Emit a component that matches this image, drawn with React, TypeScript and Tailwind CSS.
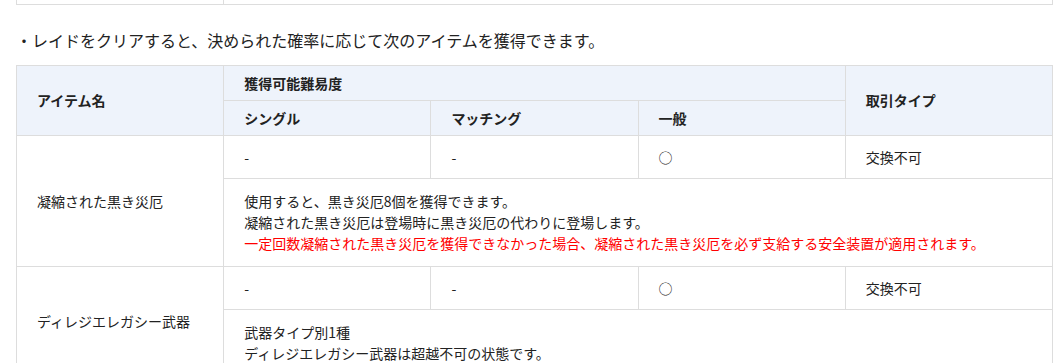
const cell = 'border border-[#dddddd] px-5 text-left align-middle'

interface Item {
    name: string
    single: string
    matching: string
    normal: string
    trade: string
    notes: { text: string; red?: boolean }[]
}

const items: Item[] = [
    {
        name: '凝縮された黒き災厄',
        single: '-',
        matching: '-',
        normal: '○',
        trade: '交換不可',
        notes: [
            { text: '使用すると、黒き災厄8個を獲得できます。' },
            { text: '凝縮された黒き災厄は登場時に黒き災厄の代わりに登場します。' },
            {
                text: '一定回数凝縮された黒き災厄を獲得できなかった場合、凝縮された黒き災厄を必ず支給する安全装置が適用されます。',
                red: true,
            },
        ],
    },
    {
        name: 'ディレジエレガシー武器',
        single: '-',
        matching: '-',
        normal: '○',
        trade: '交換不可',
        notes: [
            { text: '武器タイプ別1種' },
            { text: 'ディレジエレガシー武器は超越不可の状態です。' },
        ],
    },
]

function ItemRows({ item }: { item: Item }) {
    return (
        <>
            <tr className="h-[43px]">
                <td rowSpan={2} className={cell}>{item.name}</td>
                <td className={cell}>{item.single}</td>
                <td className={cell}>{item.matching}</td>
                <td className={cell}>{item.normal}</td>
                <td className={cell}>{item.trade}</td>
            </tr>
            <tr>
                <td colSpan={4} className={`${cell} py-[12px]`}>
                    {item.notes.map((n, i) => (
                        <div key={i} className={n.red ? 'text-[#ff0000]' : ''}>
                            {n.text}
                        </div>
                    ))}
                </td>
            </tr>
        </>
    )
}

export default function App() {
    return (
        <div
            className="bg-white text-[#222222] h-[363px] overflow-hidden"
            style={{ fontFamily: '"Noto Sans CJK JP", "Noto Sans", sans-serif' }}
        >
            {/* bottom edge of the previous table */}
            <div className="ml-4 w-[1037px] h-[5px] flex border-x border-b border-[#dddddd]">
                <div className="w-[207px] border-r border-[#dddddd]" />
            </div>

            <p className="mt-[23px] mb-[13px] pl-[16px] text-[16px] leading-[24px]">
                ・レイドをクリアすると、決められた確率に応じて次のアイテムを獲得できます。
            </p>

            <table className="ml-4 w-[1037px] table-fixed border-collapse text-[14px] leading-[21px]">
                <thead className="bg-[#eef3fb] font-bold">
                    <tr className="h-[35px]">
                        <th rowSpan={2} className={cell}>アイテム名</th>
                        <th colSpan={3} className={cell}>獲得可能難易度</th>
                        <th rowSpan={2} className={cell}>取引タイプ</th>
                    </tr>
                    <tr className="h-[35px]">
                        <th className={cell}>シングル</th>
                        <th className={cell}>マッチング</th>
                        <th className={cell}>一般</th>
                    </tr>
                </thead>
                <tbody>
                    {items.map((item) => (
                        <ItemRows key={item.name} item={item} />
                    ))}
                </tbody>
            </table>
        </div>
    )
}
